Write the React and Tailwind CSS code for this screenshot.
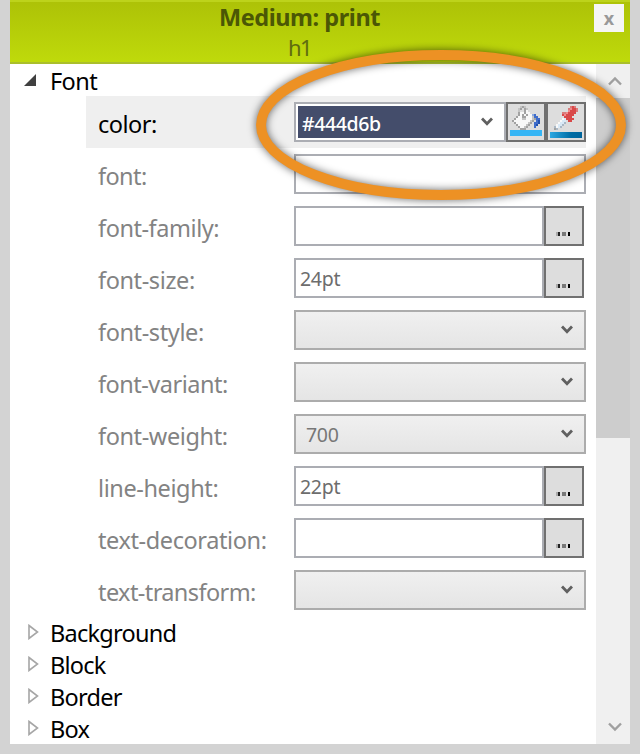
import React from 'react';

const properties = [
    { name: 'font', type: 'text', label: 'tracking-[-0.6px]' },
    { name: 'font-family', type: 'browse', label: 'tracking-[-0.45px]' },
    { name: 'font-size', type: 'browse', value: '24pt', label: 'tracking-[-0.4px]' },
    { name: 'font-style', type: 'select', label: 'tracking-[-0.4px]' },
    { name: 'font-variant', type: 'select', label: 'tracking-[-0.5px]' },
    { name: 'font-weight', type: 'select', value: '700', label: 'tracking-[-0.4px]' },
    { name: 'line-height', type: 'browse', value: '22pt', label: 'tracking-[-0.4px]' },
    { name: 'text-decoration', type: 'browse', label: 'tracking-[-0.4px]' },
    { name: 'text-transform', type: 'select', label: 'tracking-[-0.6px]' },
];

const groups = ['Background', 'Block', 'Border', 'Box'];

// Toolbar icons are drawn on a grid of 2px cells, one letter per cell
const bucketCells = [
    '....lgl.......',
    '...lg.gl......',
    '...l..gw......',
    '...gwwgww.....',
    '...gwgwgwwcb..',
    '..gwwggwwwlbb.',
    '.gwwwllwwwlgbb',
    'gwwwwwwwwlg.bd',
    '.gwwwwwwlg.bbd',
    '..gwwwwlg..bd.',
    '...gwwlg...b..',
    '....ggg.......',
];

const dropperCells = [
    '........rRr.',
    '.......rpRRr',
    '.......pRRRr',
    '....rrpRRRR.',
    '....RpRRRR..',
    '.....RRRR...',
    '....wiRRRR..',
    '...wii.RR...',
    '..wiis......',
    '.wiis.......',
    'swis........',
    'gs..........',
];

const cellColors = {
    l: '#c4c4c4',
    g: '#a2a2a2',
    w: '#f8f8f8',
    c: '#8aa9e0',
    b: '#3f6dcb',
    d: '#2350ab',
    r: '#d97b7b',
    R: '#d94848',
    p: '#f08a8a',
    i: '#d9e9f6',
    s: '#aab8c5',
};

const Cells = ({ rows, x, y }) =>
    rows.flatMap((row, r) =>
        row.split('').map((cell, c) =>
            cell === '.' ? null : (
                <rect key={`${r}-${c}`} x={x + c * 2} y={y + r * 2} width="2" height="2" fill={cellColors[cell]} />
            )
        )
    );

const BucketIcon = () => (
    <svg width="36" height="36" viewBox="0 0 36 36" shapeRendering="crispEdges">
        <Cells rows={bucketCells} x={4} y={2} />
        <rect x="2" y="26" width="32" height="6" fill="#35b5f5" />
    </svg>
);

const DropperIcon = () => (
    <svg width="36" height="36" viewBox="0 0 36 36" shapeRendering="crispEdges">
        <defs>
            <linearGradient id="pick" x1="0" x2="1">
                <stop offset="0" stopColor="#2ca8e2" />
                <stop offset="0.65" stopColor="#006da5" />
                <stop offset="1" stopColor="#00659c" />
            </linearGradient>
        </defs>
        <Cells rows={dropperCells} x={6} y={2} />
        <rect x="2" y="28" width="32" height="6" fill="url(#pick)" />
    </svg>
);

const Chevron = ({ up }) => (
    <svg width="14" height="10" viewBox="0 0 14 10" fill="none" className="ml-[3px]">
        <path d={up ? 'M1 8.5 L7 2.5 L13 8.5' : 'M1 1.5 L7 7.5 L13 1.5'} stroke="currentColor" strokeWidth="2.4" />
    </svg>
);

const SelectChevron = () => (
    <svg width="12" height="10" viewBox="0 0 12 10" fill="none" className="text-[#606060] shrink-0">
        <path d="M1 1.5 L6 6.7 L11 1.5" stroke="currentColor" strokeWidth="2.8" />
    </svg>
);

const ToolButton = ({ children }) => (
    <button className="w-10 h-10 shrink-0 border-2 border-[#707070] bg-[#dddddd] flex items-center justify-center">
        {children}
    </button>
);

const Dots = () => (
    <svg width="14" height="4" viewBox="0 0 14 4" className="mt-4 mr-[2px]" shapeRendering="crispEdges">
        <path d="M0 0h2v4H0z" fill="#aaa" />
        <path d="M2 0h2v4H2z" fill="#222" />
        <path d="M6 0h4v4H6z" fill="#777" />
        <path d="M12 0h2v4h-2z" fill="#000" />
    </svg>
);

const Control = ({ type, value }) => {
    if (type === 'select') {
        return (
            <div className="w-[292px] h-10 border-2 border-[#acacac] bg-gradient-to-b from-[#f0f0f0] to-[#e5e5e5] flex items-center justify-between pl-[10px] pr-[11px] text-[19.5px] tracking-[-0.3px] text-[#777]">
                <span className="mt-[2px]">{value}</span>
                <SelectChevron />
            </div>
        );
    }
    if (type === 'browse') {
        return (
            <div className="flex">
                <div className="w-[250px] h-10 border-2 border-[#abadb3] bg-white flex items-center px-1 text-[19.5px] tracking-[-0.3px] text-[#6d6d6d]">
                    <span className="mt-[2px]">{value}</span>
                </div>
                <ToolButton><Dots /></ToolButton>
            </div>
        );
    }
    return <div className="w-[292px] h-10 border-2 border-[#abadb3] bg-white" />;
};

const App = () => {
    return (
        <div className="w-[640px] h-[754px] bg-[#d3d3d3] px-[10px] pb-[10px] flex flex-col relative overflow-hidden font-['Noto_Sans',sans-serif]">
            <header className="h-16 shrink-0 border-t-2 border-t-[#bdd31b] border-b-2 border-b-[#aabf2c] bg-gradient-to-b from-[#adc207] to-[#bfda0b] flex">
                <div className="flex-1 flex flex-col items-center text-[#4b5705] pr-[5px]">
                    <h1 className="text-[23.5px] leading-[31px] font-bold whitespace-nowrap tracking-[-0.45px]">Medium: print</h1>
                    <span className="text-[22px] leading-[29px] text-[#5f6d10] tracking-[-1.5px]">h1</span>
                </div>
                <button className="w-[30px] h-7 mt-[2px] mr-[6px] bg-[#f5f5f5] text-[#999] text-[18px] leading-[26px] font-bold">x</button>
            </header>

            <div className="flex flex-1 min-h-0 bg-white">
                <main className="flex-1 text-[23.5px]">
                    <div className="h-8 flex items-center text-black">
                        <svg width="14" height="14" viewBox="0 0 14 14" className="ml-[13px] mr-[13px]">
                            <path d="M1 13 L13 1 V13 Z" fill="#404040" />
                        </svg>
                        <span className="leading-8 mt-[2px] tracking-[-0.6px]">Font</span>
                    </div>

                    <div className="ml-[76px] w-[500px] h-[52px] bg-[#efefef] flex items-center">
                        <div className="w-[208px] pl-3 text-black tracking-[-0.5px] mt-[5px]">color:</div>
                        <div className="w-[212px] h-10 border-2 border-[#abadb3] bg-white flex items-center">
                            <div className="w-[172px] h-8 ml-[2px] bg-[#444d6b] text-white text-[19.5px] leading-[35px] pl-1 tracking-[-0.4px] font-medium">#444d6b</div>
                            <div className="ml-[11px]"><SelectChevron /></div>
                        </div>
                        <ToolButton><BucketIcon /></ToolButton>
                        <ToolButton><DropperIcon /></ToolButton>
                    </div>

                    {properties.map((prop) => (
                        <div key={prop.name} className="ml-[76px] h-[52px] flex items-center">
                            <div className={`w-[208px] pl-3 mt-[5px] text-[#838383] whitespace-nowrap ${prop.label}`}>{prop.name}:</div>
                            <Control type={prop.type} value={prop.value} />
                        </div>
                    ))}

                    {groups.map((group) => (
                        <div key={group} className="h-8 flex items-center text-black">
                            <svg width="11" height="16" viewBox="0 0 11 16" className="ml-[18px] mr-[11px]">
                                <path d="M1 1.5 L9.5 8 L1 14.5 Z" fill="#fff" stroke="#a6a6a6" strokeWidth="1.6" />
                            </svg>
                            <span className="leading-8 mt-[2px] tracking-[-0.75px]">{group}</span>
                        </div>
                    ))}
                </main>

                <aside className="w-[34px] bg-[#f0f0f0] flex flex-col text-[#a0a0a0]">
                    <div className="h-[34px] flex items-center justify-center"><Chevron up /></div>
                    <div className="h-[340px] bg-[#cdcdcd]" />
                    <div className="flex-1" />
                    <div className="h-[34px] flex items-center justify-center"><Chevron /></div>
                </aside>
            </div>

            {/* Highlight ring over the color row */}
            <svg width="640" height="240" viewBox="0 0 640 240" className="absolute left-0 top-0 pointer-events-none">
                <defs>
                    <filter id="ringShadow" x="-10%" y="-20%" width="120%" height="140%">
                        <feGaussianBlur stdDeviation="4" />
                    </filter>
                </defs>
                <ellipse cx="441" cy="125" rx="180" ry="70" fill="none" stroke="#000" strokeOpacity="0.6" strokeWidth="10" filter="url(#ringShadow)" />
                <ellipse cx="441" cy="125" rx="180" ry="70" fill="none" stroke="#ed9124" strokeWidth="10" />
            </svg>
        </div>
    );
};

export default App;
